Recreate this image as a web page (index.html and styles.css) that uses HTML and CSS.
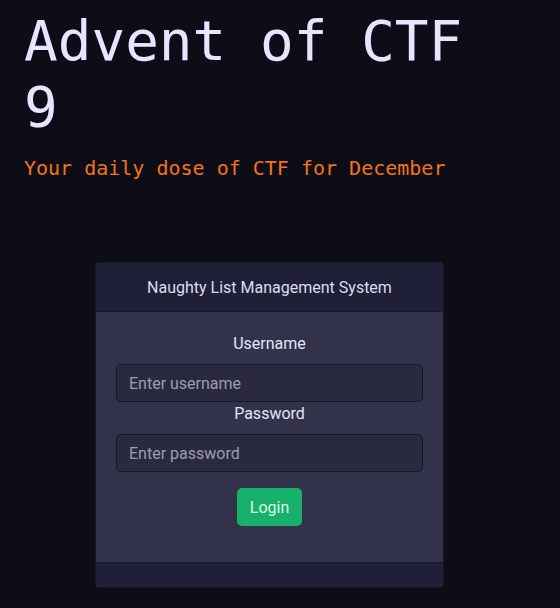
FILE: index.html
```html
<!DOCTYPE html>
<html lang="en">
<head>
<meta charset="utf-8">
<title>Advent of CTF 9</title>
<link rel="stylesheet" href="styles.css">
</head>
<body>
<header class="hero">
  <h1 class="title">Advent of CTF 9</h1>
  <p class="subtitle">Your daily dose of CTF for December</p>
</header>
<main class="stage">
  <section class="card">
    <div class="card-head">Naughty List Management System</div>
    <form class="card-body">
      <label class="label" for="u">Username</label>
      <input class="field" id="u" type="text" placeholder="Enter username">
      <label class="label" for="p">Password</label>
      <input class="field" id="p" type="password" placeholder="Enter password">
      <button class="btn" type="button">Login</button>
    </form>
    <div class="card-foot"></div>
  </section>
</main>
</body>
</html>
```
FILE: styles.css
```css
* { box-sizing: border-box; }
html, body { margin: 0; padding: 0; }
body {
  background: #0d0d17;
  color: #e4e4f8;
  font-family: Roboto, "Noto Sans", sans-serif;
  width: 560px;
  height: 608px;
  overflow: hidden;
}
.hero { padding: 8px 24px 0 24px; }
.title {
  margin: 0;
  font-family: "DejaVu Sans Mono", monospace;
  font-weight: 400;
  font-size: 56px;
  line-height: 66px;
  color: #e6e4ff;
  width: 460px;
}
.subtitle {
  margin: 14px 0 0 0;
  font-family: "DejaVu Sans Mono", monospace;
  font-size: 20px;
  line-height: 28px;
  color: #f5731c;
}
.stage {
  display: flex;
  justify-content: flex-start;
  padding: 80px 0 0 95px;
}
.card {
  width: 349px;
  background: #32324b;
  border: 1px solid #161626;
  border-radius: 4px;
  overflow: hidden;
}
.card-head {
  height: 49px;
  background: #1f2038;
  border-bottom: 1px solid #161626;
  display: flex;
  align-items: center;
  justify-content: center;
  font-size: 16px;
  color: #dcdcf0;
}
.card-body {
  margin: 0;
  padding: 20px 20px 36px 20px;
  display: flex;
  flex-direction: column;
  align-items: center;
}
.label {
  font-size: 16px;
  line-height: 24px;
  color: #e4e4f8;
}
.field {
  width: 100%;
  height: 38px;
  margin-top: 8px;
  padding: 0 12px;
  background: #292940;
  border: 1px solid #17172a;
  border-radius: 5px;
  font-family: Roboto, "Noto Sans", sans-serif;
  font-size: 16px;
  color: #e4e4f8;
  outline: none;
}
.field::placeholder { color: #9c9cb4; }
.btn {
  margin-top: 16px;
  height: 38px;
  padding: 0 13px;
  background: #17b16b;
  border: none;
  border-radius: 5px;
  font-family: Roboto, "Noto Sans", sans-serif;
  font-size: 16px;
  color: #d8fbe6;
}
.card-foot {
  height: 25px;
  background: #1f2038;
  border-top: 1px solid #161626;
}
```
